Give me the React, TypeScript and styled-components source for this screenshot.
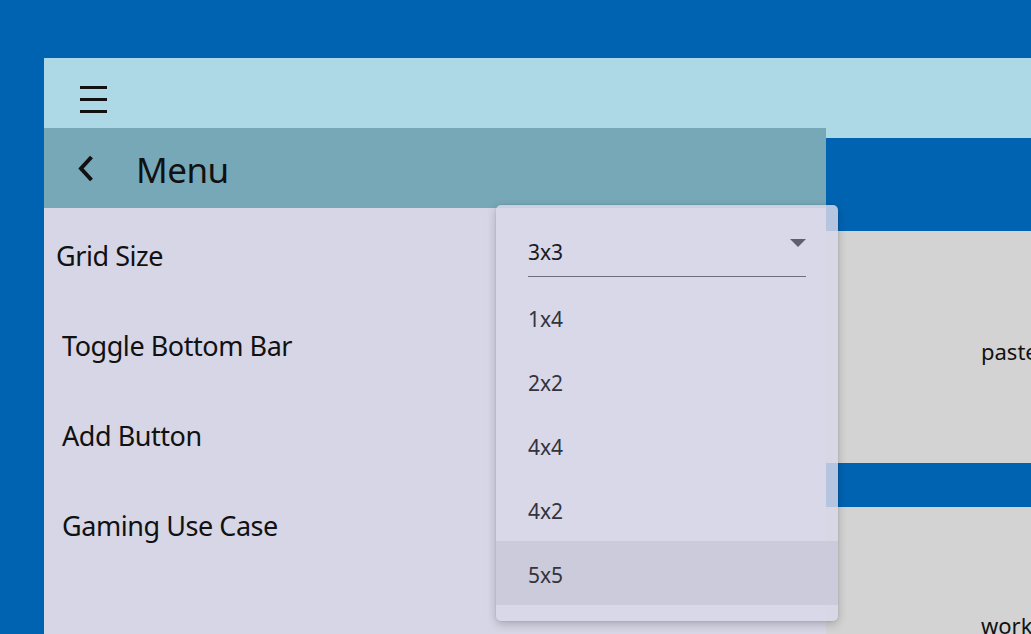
import React from "react";
import styled, { createGlobalStyle } from "styled-components";

const Global = createGlobalStyle`
  html, body { margin: 0; padding: 0; }
  body {
    width: 1031px;
    height: 634px;
    overflow: hidden;
    background: #0063b1;
    font-family: "Noto Sans", "Open Sans", sans-serif;
  }
`;

const Page = styled.div`
  padding: 58px 0 0 44px;
  height: 634px;
  box-sizing: border-box;
  overflow: hidden;
`;

const Window = styled.div`
  position: relative;
  width: 1200px;
  height: 700px;
  display: flex;
  flex-direction: column;
`;

const TopBar = styled.div`
  height: 80px;
  background: #add8e6;
  display: flex;
  align-items: center;
  padding-left: 36px;
  flex-shrink: 0;
`;

const Hamburger = styled.div`
  width: 27px;
  height: 27px;
  display: flex;
  flex-direction: column;
  justify-content: space-between;
  margin-top: 2px;
  span {
    display: block;
    height: 3px;
    background: #111;
  }
`;

const Content = styled.div`
  display: flex;
  flex-direction: column;
  gap: 44px;
  padding-top: 93px;
`;

const Cell = styled.div<{ $shift?: number }>`
  height: 232px;
  background: #d3d3d3;
  display: flex;
  align-items: center;
  padding-left: 937px;
  font-size: 22px;
  color: #111;
  padding-top: ${(p) => p.$shift ?? 0}px;
  box-sizing: border-box;
`;

const Flyout = styled.div`
  position: absolute;
  left: 0;
  top: 70px;
  width: 782px;
  bottom: 0;
  background: #d6d6e6;
  display: flex;
  flex-direction: column;
`;

const FlyoutHeader = styled.div`
  height: 80px;
  background: #77a8b8;
  display: flex;
  align-items: center;
  padding-left: 34px;
  gap: 42px;
`;

const Title = styled.div`
  font-size: 35px;
  color: #111;
  letter-spacing: -0.5px;
  line-height: 1;
  padding-top: 3px;
`;

const ItemList = styled.div`
  display: flex;
  flex-direction: column;
  padding-top: 2px;
`;

const Item = styled.div<{ $indent: number }>`
  height: 90px;
  display: flex;
  align-items: center;
  padding-left: ${(p) => p.$indent}px;
  font-size: 27px;
  letter-spacing: -0.45px;
  color: #111;
`;

const Popup = styled.div`
  position: absolute;
  left: 452px;
  top: 147px;
  width: 342px;
  height: 416px;
  box-sizing: border-box;
  border-radius: 5px;
  background: rgba(216, 216, 232, 0.84);
  box-shadow: 0 3px 10px rgba(0, 0, 0, 0.22), 0 0 2px rgba(0, 0, 0, 0.12);
  display: flex;
  flex-direction: column;
  padding-bottom: 16px;
`;

const Field = styled.div`
  height: 80px;
  box-sizing: border-box;
  padding: 0 32px;
  display: flex;
  flex-direction: column;
`;

const FieldRow = styled.div`
  height: 72px;
  display: flex;
  align-items: flex-end;
  justify-content: space-between;
  padding-bottom: 10px;
  box-sizing: border-box;
  border-bottom: 1px solid #6e6e7e;
  font-size: 21px;
  color: #1a1a24;
`;

const Caret = styled.svg`
  width: 16px;
  height: 8px;
  margin-bottom: 19px;
`;

const Option = styled.div<{ $active?: boolean }>`
  height: 64px;
  display: flex;
  align-items: center;
  padding-left: 32px;
  padding-top: 3px;
  box-sizing: border-box;
  font-size: 21px;
  color: #33333d;
  background: ${(p) => (p.$active ? "rgba(200, 200, 216, 0.8)" : "transparent")};
`;

const options = ["1x4", "2x2", "4x4", "4x2", "5x5"];

export default function App() {
  return (
    <>
      <Global />
      <Page>
        <Window>
          <TopBar>
            <Hamburger>
              <span />
              <span />
              <span />
            </Hamburger>
          </TopBar>
          <Content>
            <Cell $shift={8}>pasted</Cell>
            <Cell $shift={4}>working</Cell>
          </Content>
          <Flyout>
            <FlyoutHeader>
              <svg width="16" height="27" viewBox="0 0 16 27">
                <path d="M13.5 2 L3 13.5 L13.5 25" fill="none" stroke="#111" strokeWidth="4" strokeLinejoin="miter" />
              </svg>
              <Title>Menu</Title>
            </FlyoutHeader>
            <ItemList>
              <Item $indent={12}>Grid Size</Item>
              <Item $indent={18}>Toggle Bottom Bar</Item>
              <Item $indent={18}>Add Button</Item>
              <Item $indent={18}>Gaming Use Case</Item>
            </ItemList>
          </Flyout>
          <Popup>
            <Field>
              <FieldRow>
                <span>3x3</span>
                <Caret viewBox="0 0 16 8">
                  <path d="M0 0 L16 0 L8 8 Z" fill="#5f5f6e" />
                </Caret>
              </FieldRow>
            </Field>
            {options.map((o) => (
              <Option key={o} $active={o === "5x5"}>
                {o}
              </Option>
            ))}
          </Popup>
        </Window>
      </Page>
    </>
  );
}
